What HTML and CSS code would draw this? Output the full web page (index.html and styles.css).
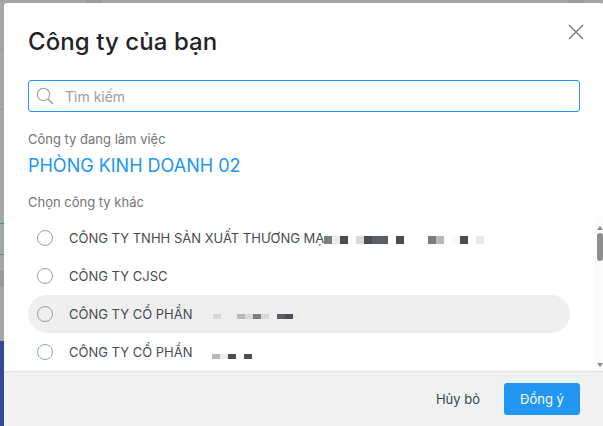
FILE: index.html
```html
<!DOCTYPE html>
<html lang="vi">
<head>
  <meta charset="UTF-8" />
  <meta name="viewport" content="width=device-width, initial-scale=1" />
  <title>Công ty của bạn</title>
  <link rel="stylesheet" href="styles.css">
</head>
<body>
  <!-- trang phia sau lop phu -->
  <div class="page-top">
    <span class="top-tab top-tab-left"></span>
    <span class="top-tab top-tab-right"></span>
  </div>
  <div class="page-side">
    <span class="side-line side-line-1"></span>
    <span class="side-line side-line-2"></span>
    <span class="side-green"></span>
    <span class="side-gray"></span>
    <span class="side-blue"></span>
  </div>

  <section class="modal">
    <header class="modal-header">
      <h1 class="modal-title">Công ty của bạn</h1>
      <button class="modal-close" title="Đóng">
        <svg width="16" height="16" viewBox="0 0 16 16"><path d="M1 1 L15 15 M15 1 L1 15" stroke="#757575" stroke-width="1.3" fill="none" /></svg>
      </button>
    </header>

    <div class="modal-search">
      <div class="search-box">
        <svg class="search-icon" width="18" height="18" viewBox="0 0 18 18"><circle cx="7.5" cy="7.5" r="6.2" stroke="#9e9e9e" stroke-width="1.1" fill="none" /><path d="M12 12 L17 17" stroke="#9e9e9e" stroke-width="1.6" fill="none" /></svg>
        <input class="search-input" type="text" placeholder="Tìm kiếm" />
      </div>
    </div>

    <p class="label label-current">Công ty đang làm việc</p>
    <p class="current-company">PHÒNG KINH DOANH 02</p>
    <p class="label label-other">Chọn công ty khác</p>

    <div class="company-area">
      <ul class="company-list">
        <li class="company-row">
          <span class="radio"></span>
          <span class="company-name">CÔNG TY TNHH SẢN XUẤT THƯƠNG MẠ</span>
          <span class="mask mask-1">
            <i class="s3"></i><i class="s6"></i><i class="s1"></i><i></i><i class="s5"></i><i class="s1"></i><i class="s2"></i><i class="s2"></i><i></i><i class="s1"></i><i></i><i></i><i></i><i class="s3"></i><i class="s4"></i><i></i><i class="s7"></i><i class="s1"></i><i></i><i class="s6"></i>
          </span>
        </li>
        <li class="company-row">
          <span class="radio"></span>
          <span class="company-name">CÔNG TY CJSC</span>
        </li>
        <li class="company-row is-hover">
          <span class="radio"></span>
          <span class="company-name">CÔNG TY CỔ PHẦN</span>
          <span class="mask mask-3">
            <i class="s5"></i><i></i><i></i><i class="s4"></i><i class="s5"></i><i class="s3"></i><i class="s5"></i><i></i><i class="s2"></i><i class="s1"></i><i class="s6"></i>
          </span>
        </li>
        <li class="company-row">
          <span class="radio"></span>
          <span class="company-name">CÔNG TY CỔ PHẦN</span>
          <span class="mask mask-4">
            <i class="s4"></i><i class="s6"></i><i class="s1"></i><i></i><i class="s1"></i>
          </span>
        </li>
      </ul>
      <div class="scrollbar">
        <span class="scroll-arrow scroll-up"></span>
        <span class="scroll-thumb"></span>
        <span class="scroll-arrow scroll-down"></span>
      </div>
    </div>

    <footer class="modal-footer">
      <button class="btn btn-cancel">Hủy bỏ</button>
      <button class="btn btn-ok">Đồng ý</button>
    </footer>
  </section>
</body>
</html>
```

FILE: styles.css
```css
* {
  box-sizing: border-box;
}
html,
body {
  height: 100%;
}
body {
  margin: 0;
  overflow: hidden;
  position: relative;
  background: #a6a6a6;
  font-family: 'Inter', 'Noto Sans', sans-serif;
}

/* nen phia sau */
.page-top {
  height: 3px;
  position: relative;
}
.top-tab {
  position: absolute;
  top: 0;
  width: 16px;
  height: 3px;
  background: #9a9a9f;
}
.top-tab-left {
  left: 86px;
}
.top-tab-right {
  left: 568px;
}
.page-side span {
  position: absolute;
  left: 0;
  width: 4px;
}
.side-line {
  height: 1px;
  background: #98989c;
}
.side-line-1 {
  top: 49px;
}
.side-line-2 {
  top: 109px;
}
.side-green {
  top: 223px;
  height: 32px;
  background: #9fa9a7;
  border-top: 1px solid #3c9a6c;
  border-bottom: 1px solid #3c9a6c;
}
.side-gray {
  top: 271px;
  height: 16px;
  background: #98989d;
}
.side-blue {
  top: 341px;
  height: 85px;
  background: #32479e;
}

/* modal */
.modal {
  position: absolute;
  top: 3px;
  left: 4px;
  width: 600px;
  height: 423px;
  display: flex;
  flex-direction: column;
  background: #fff;
  border-radius: 3px 3px 0 0;
}
.modal-header {
  height: 77px;
  padding: 22px 24px 0;
  display: flex;
  justify-content: space-between;
  align-items: flex-start;
}
.modal-title {
  margin: 0;
  font-size: 24px;
  line-height: 34px;
  font-weight: 450;
  letter-spacing: 0.08px;
  color: #212529;
}
.modal-close {
  margin: -1px -4px 0 0;
  padding: 0;
  width: 16px;
  height: 16px;
  border: none;
  background: none;
  cursor: pointer;
}
.modal-search {
  padding: 0 24px;
}
.search-box {
  height: 32px;
  display: flex;
  align-items: center;
  border: 1px solid #2196f3;
  border-radius: 3px;
  padding-left: 7px;
}
.search-icon {
  flex-shrink: 0;
}
.search-input {
  flex: 1;
  margin-left: 11px;
  min-width: 0;
  border: none;
  outline: none;
  padding: 0;
  font-family: inherit;
  font-size: 14px;
  color: #424242;
}
.search-input::placeholder {
  color: #9e9e9e;
  opacity: 1;
}
.label {
  margin: 0;
  padding: 0 24px;
  font-size: 13px;
  line-height: 18px;
  color: #757575;
}
.label-current {
  margin-top: 18px;
}
.current-company {
  margin: 5px 0 0;
  padding: 0 24px;
  font-size: 18px;
  line-height: 26px;
  color: #2196f3;
}
.label-other {
  margin-top: 14px;
}

/* danh sach */
.company-area {
  margin-top: 6px;
  flex: 1;
  min-height: 0;
  display: flex;
  padding-left: 24px;
}
.company-list {
  flex: 1;
  margin: 2px 25px 0 0;
  padding: 0;
  list-style: none;
  overflow: hidden;
}
.company-row {
  height: 38px;
  display: flex;
  align-items: center;
  padding-left: 9px;
  border-radius: 19px;
}
.is-hover {
  background: #efefef;
}
.radio {
  flex-shrink: 0;
  width: 16px;
  height: 16px;
  border: 1px solid #90a4ae;
  border-radius: 50%;
  background: #fff;
}
.is-hover .radio {
  background: #efefef;
}
.company-name {
  margin-left: 16px;
  font-size: 13px;
  white-space: nowrap;
  color: #484c50;
}
.mask {
  display: flex;
}
.mask i {
  width: 8px;
  height: 8px;
}
.mask-1 {
  margin-top: 4px;
}
.mask-3 {
  margin-left: 20px;
  margin-top: 5px;
}
.mask-3 i,
.mask-4 i {
  height: 5px;
}
.mask-4 {
  margin-left: 19px;
  margin-top: 8px;
}
.s1 { background: #4a4d55; }
.s2 { background: #5a5d64; }
.s3 { background: #7c7c82; }
.s4 { background: #b8b8ba; }
.s5 { background: #d8d8d8; }
.s6 { background: #ececec; }
.s7 { background: #f8f8f8; }

.scrollbar {
  flex-shrink: 0;
  width: 9px;
  display: flex;
  flex-direction: column;
  align-items: center;
  background: #fbfbfb;
  padding-top: 9px;
}
.scroll-arrow {
  width: 0;
  height: 0;
  border-left: 3px solid transparent;
  border-right: 3px solid transparent;
}
.scroll-up {
  border-bottom: 4px solid #8a8a8a;
}
.scroll-down {
  margin-top: auto;
  margin-bottom: 4px;
  border-top: 4px solid #8a8a8a;
}
.scroll-thumb {
  margin-top: 3px;
  width: 6px;
  height: 28px;
  border-radius: 3px;
  background: #8e8e8e;
}

/* chan modal */
.modal-footer {
  flex-shrink: 0;
  height: 55px;
  display: flex;
  justify-content: flex-end;
  align-items: center;
  gap: 24px;
  padding: 0 24px;
  background: #f1f1f1;
  border-top: 1px solid #e0e0e0;
}
.btn {
  height: 32px;
  border: none;
  border-radius: 3px;
  font-family: inherit;
  font-size: 13px;
  cursor: pointer;
}
.btn-cancel {
  padding: 0;
  background: none;
  color: #37474f;
}
.btn-ok {
  width: 76px;
  background: #2196f3;
  color: #fff;
}
```
